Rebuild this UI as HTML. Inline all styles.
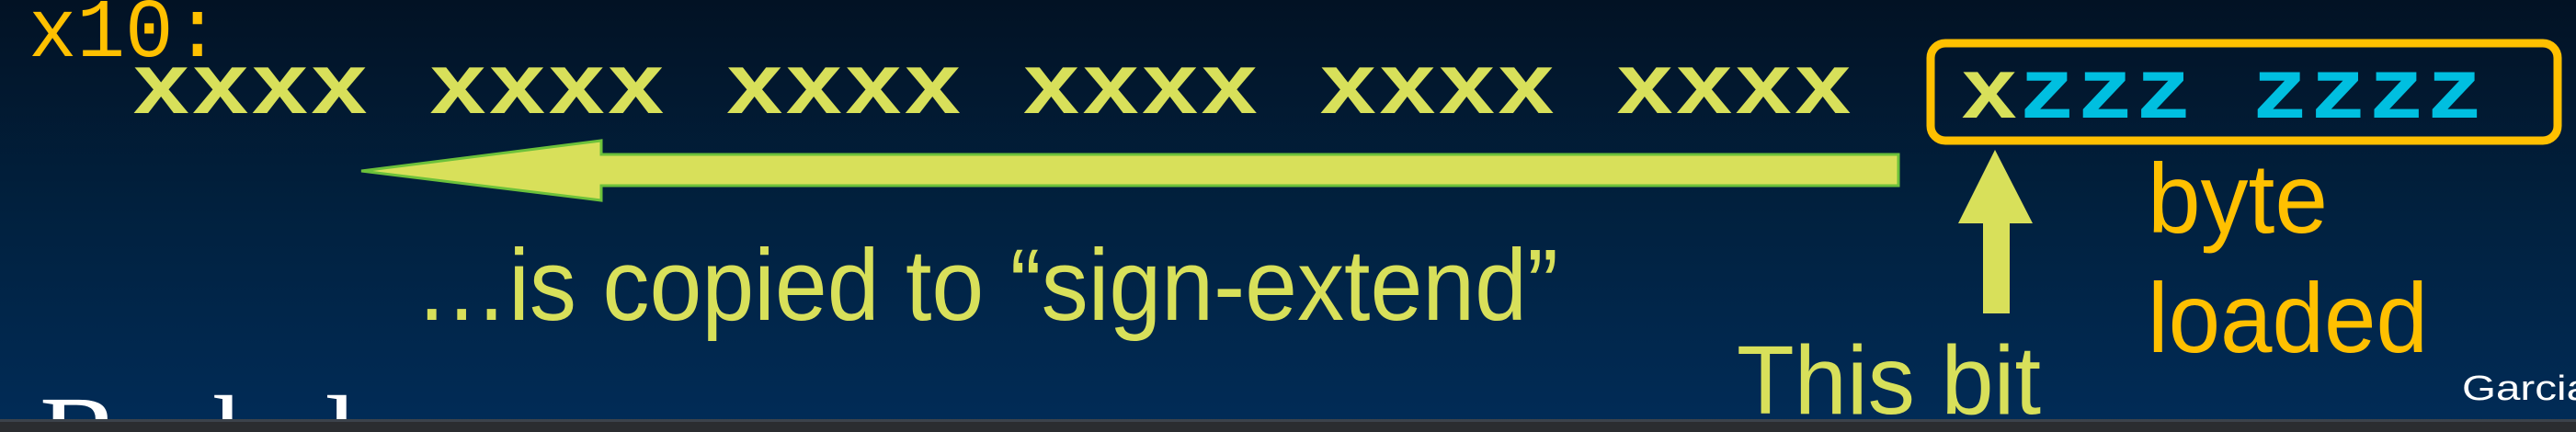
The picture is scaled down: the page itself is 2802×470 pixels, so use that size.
<!DOCTYPE html>
<html><head><meta charset="utf-8"><style>
html,body{margin:0;padding:0;width:2802px;height:470px;overflow:hidden;background:#001a38}
svg{display:block}
</style></head><body>
<svg width="2802" height="470" viewBox="0 0 2802 470" xmlns="http://www.w3.org/2000/svg">
<defs>
<linearGradient id="bg" x1="0" y1="0" x2="0" y2="1">
<stop offset="0" stop-color="#021224"/>
<stop offset="0.5" stop-color="#01213f"/>
<stop offset="1" stop-color="#012c58"/>
</linearGradient>
<clipPath id="c"><rect width="2802" height="456"/></clipPath>
</defs>
<rect width="2802" height="470" fill="url(#bg)"/>
<g clip-path="url(#c)">
<text x="31" y="61" font-family="Liberation Mono, monospace" font-size="87" fill="#ffc000" textLength="210" lengthAdjust="spacingAndGlyphs" transform="translate(0,61) scale(1,1.05) translate(0,-61)">x10:</text>
<g transform="translate(0,123) scale(1,0.88) translate(0,-123)">
<text x="143" y="123" font-family="Liberation Mono, monospace" font-weight="bold" font-size="107" fill="#d8e05a" textLength="1872" lengthAdjust="spacingAndGlyphs">xxxx xxxx xxxx xxxx xxxx xxxx</text>
</g>
<rect x="2100" y="47" width="682" height="106" rx="16" fill="none" stroke="#ffc000" stroke-width="9"/>
<g transform="translate(0,128) scale(1,0.88) translate(0,-128)">
<text x="2132" y="128" font-family="Liberation Mono, monospace" font-weight="bold" font-size="107" textLength="570" lengthAdjust="spacingAndGlyphs"><tspan fill="#d8e05a">x</tspan><tspan fill="#00bfe0">zzz zzzz</tspan></text>
</g>
<polygon points="393,186 654,153 654,168 2065,168 2065,202 654,202 654,218" fill="#d8e05a" stroke="#6cc13a" stroke-width="3"/>
<polygon points="2170,163 2211,243 2186,243 2186,341 2157,341 2157,243 2130,243" fill="#d8e05a"/>
<text x="451" y="348" font-family="Liberation Sans, sans-serif" font-size="110" fill="#d8e05a" textLength="1244" lengthAdjust="spacingAndGlyphs">…is copied to “sign-extend”</text>
<text x="1889" y="450" font-family="Liberation Sans, sans-serif" font-size="106" fill="#d8e05a" textLength="331" lengthAdjust="spacingAndGlyphs">This bit</text>
<text x="2336" y="253" font-family="Liberation Sans, sans-serif" font-size="108" fill="#ffc000" textLength="196" lengthAdjust="spacingAndGlyphs">byte</text>
<text x="2336" y="383" font-family="Liberation Sans, sans-serif" font-size="108" fill="#ffc000" textLength="305" lengthAdjust="spacingAndGlyphs">loaded</text>
<text x="2678" y="435" font-family="Liberation Sans, sans-serif" font-size="38" fill="#ffffff" textLength="140" lengthAdjust="spacingAndGlyphs">Garcia</text>
<text x="43" y="520" font-family="Liberation Serif, serif" font-size="130" fill="#ffffff">Berkeley</text>
</g>
<rect x="0" y="456" width="2802" height="14" fill="#2b2d30"/>
<rect x="0" y="456" width="2802" height="3" fill="#3c434b"/>
</svg>
</body></html>
